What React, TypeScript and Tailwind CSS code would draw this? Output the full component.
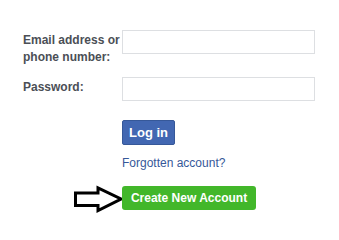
export default function App() {
  return (
    <div className="min-h-screen bg-white pl-[23px] pt-[30px] font-['Liberation_Sans',Arial,sans-serif]">
      {/* Email row */}
      <div className="flex h-[47px] items-start">
        <label className="w-[99px] pt-[2px] text-[12px] font-bold leading-[16.5px] text-[#4b4f56]">
          Email address or phone number:
        </label>
        <input className="h-[24px] w-[193px] border border-[#dddfe2] bg-white outline-none" type="text" />
      </div>

      {/* Password row */}
      <div className="flex items-start">
        <label className="w-[99px] pt-[2px] text-[12px] font-bold leading-[16.5px] text-[#4b4f56]">
          Password:
        </label>
        <input className="h-[24px] w-[193px] border border-[#dddfe2] bg-white outline-none" type="password" />
      </div>

      <div className="ml-[99px] mt-[19px] flex flex-col items-start">
        <button className="h-[25px] w-[53px] rounded-[2px] border border-[#365899] bg-[#4267b2] text-center text-[13px] font-bold leading-[23px] text-white">
          Log in
        </button>
        <a href="#" className="mt-[10px] text-[12px] leading-[16px] text-[#365899]">
          Forgotten account?
        </a>
      </div>

      <div className="mt-[15px] flex items-start">
        <div className="flex w-[99px] justify-end">
          <svg width="52" height="29" viewBox="0 0 52 29" className="mr-[-2px] mt-[-1px]">
            <polygon
              points="3.5,8 26,8 26,3 49,14 26,25.5 26,20.5 3.5,20.5"
              fill="white"
              stroke="black"
              strokeWidth="3"
              strokeLinejoin="miter"
            />
          </svg>
        </div>
        <button className="relative h-[24px] w-[134px] rounded-[3px] bg-[#42b72a] text-center text-[12px] font-bold leading-[24px] text-white">
          Create New Account
        </button>
      </div>
    </div>
  );
}
